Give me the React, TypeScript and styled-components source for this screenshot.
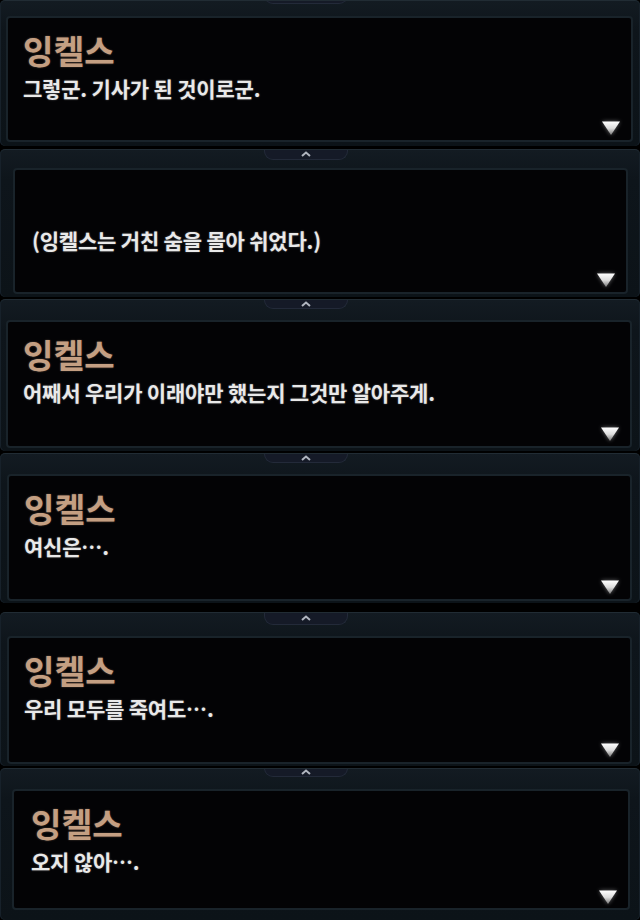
import React from "react";
import styled, { createGlobalStyle } from "styled-components";

const Global = createGlobalStyle`
  html, body { margin: 0; padding: 0; background: #000; }
  body { width: 640px; height: 920px; overflow: hidden; font-family: "Noto Sans CJK KR", "Noto Sans", sans-serif; }
`;

const Page = styled.main`
  display: flex;
  flex-direction: column;
  width: 640px;
  height: 920px;
  background: #000;
`;

type PanelProps = {
  $h: number;
  $gap: number;
  $pt: number;
  $pb: number;
  $pl: number;
  $pr: number;
};

const Frame = styled.section<PanelProps>`
  position: relative;
  box-sizing: border-box;
  height: ${(p) => p.$h}px;
  margin-top: ${(p) => p.$gap}px;
  padding: ${(p) => `${p.$pt}px ${p.$pr}px ${p.$pb}px ${p.$pl}px`};
  display: flex;
  flex-direction: column;
  background: linear-gradient(180deg, #131b22 0%, #0e151b 20%, #0c1318 100%);
  border-top: 1px solid #212c34;
  border-radius: 5px;
  box-shadow: inset 1px 0 0 #17212a, inset -1px 0 0 #17212a;
  overflow: hidden;
  flex-shrink: 0;
`;

const Tab = styled.div<{ $top: number; $h: number }>`
  position: absolute;
  left: 264px;
  top: ${(p) => p.$top}px;
  width: 84px;
  height: ${(p) => p.$h}px;
  box-sizing: border-box;
  background: #151a27;
  border: 1px solid #232a39;
  border-top: none;
  border-radius: 0 0 9px 9px;
  display: flex;
  align-items: center;
  justify-content: center;
`;

const Box = styled.div<{ $ti: number }>`
  position: relative;
  flex: 1;
  box-sizing: border-box;
  background: #030305;
  border: 2px solid #19232a;
  border-radius: 4px;
  padding: 13px 0 0 ${(p) => p.$ti}px;
  display: flex;
  flex-direction: column;
`;

const Name = styled.div<{ $size: number }>`
  height: 38px;
  font-size: ${(p) => p.$size}px;
  line-height: 38px;
  font-weight: 700;
  color: #c49f82;
  margin-bottom: 5px;
  letter-spacing: 0.3px;
  text-shadow: 0 0 2px rgba(196, 159, 130, 0.45);
`;

const Line = styled.div`
  font-size: 21px;
  line-height: 28px;
  font-weight: 700;
  color: #e9e9e9;
  letter-spacing: -0.2px;
  text-shadow: 0 0 2px rgba(255, 255, 255, 0.35);
`;

const Arrow = styled.svg<{ $r: number; $b: number }>`
  position: absolute;
  right: ${(p) => p.$r}px;
  bottom: ${(p) => p.$b}px;
  width: 20px;
  height: 16px;
  filter: drop-shadow(0 0 2px rgba(255, 255, 255, 0.4));
`;

const Chevron = () => (
  <svg width="10" height="6" viewBox="0 0 10 6">
    <polyline points="1,5 5,1.5 9,5" fill="none" stroke="#b0b5bf" strokeWidth="2" />
  </svg>
);

const Triangle = ({ r, b }: { r: number; b: number }) => (
  <Arrow $r={r} $b={b} viewBox="0 0 20 16">
    <defs>
      <linearGradient id="tri" x1="0" y1="0" x2="0" y2="1">
        <stop offset="0" stopColor="#ffffff" />
        <stop offset="0.5" stopColor="#dddddd" />
        <stop offset="1" stopColor="#777777" />
      </linearGradient>
    </defs>
    <polygon points="1,1.5 19,1.5 10,15" fill="url(#tri)" />
  </Arrow>
);

type Dialog = {
  name: string;
  text: string;
  h: number;
  gap: number;
  pt: number;
  pb: number;
  pl: number;
  pr: number;
  tabTop: number;
  tabH: number;
  ti: number;
  ar: number;
  ab: number;
};

const dialogs: Dialog[] = [
  { name: "잉켈스", text: "그렇군. 기사가 된 것이로군.", h: 146, gap: 0, pt: 15, pb: 4, pl: 6, pr: 7, tabTop: -8, tabH: 11, ti: 15, ar: 10, ab: 4 },
  { name: "", text: "(잉켈스는 거친 숨을 몰아 쉬었다.)", h: 148, gap: 3, pt: 18, pb: 3, pl: 13, pr: 12, tabTop: -1, tabH: 11, ti: 17, ar: 10, ab: 4 },
  { name: "잉켈스", text: "어째서 우리가 이래야만 했는지 그것만 알아주게.", h: 152, gap: 2, pt: 20, pb: 3, pl: 6, pr: 8, tabTop: -1, tabH: 10, ti: 15, ar: 10, ab: 4 },
  { name: "잉켈스", text: "여신은….", h: 150, gap: 2, pt: 20, pb: 2, pl: 7, pr: 8, tabTop: -1, tabH: 10, ti: 15, ar: 10, ab: 4 },
  { name: "잉켈스", text: "우리 모두를 죽여도….", h: 154, gap: 9, pt: 23, pb: 2, pl: 7, pr: 8, tabTop: -1, tabH: 13, ti: 15, ar: 10, ab: 4 },
  { name: "잉켈스", text: "오지 않아….", h: 152, gap: 2, pt: 20, pb: 10, pl: 12, pr: 10, tabTop: -1, tabH: 9, ti: 17, ar: 10, ab: 3 },
];

export default function App() {
  return (
    <>
      <Global />
      <Page>
        {dialogs.map((d, i) => (
          <Frame key={i} $h={d.h} $gap={d.gap} $pt={d.pt} $pb={d.pb} $pl={d.pl} $pr={d.pr}>
            <Tab $top={d.tabTop} $h={d.tabH}>
              <Chevron />
            </Tab>
            <Box $ti={d.ti}>
              <Name $size={33}>{d.name}</Name>
              <Line>{d.text}</Line>
              <Triangle r={d.ar} b={d.ab} />
            </Box>
          </Frame>
        ))}
      </Page>
    </>
  );
}
